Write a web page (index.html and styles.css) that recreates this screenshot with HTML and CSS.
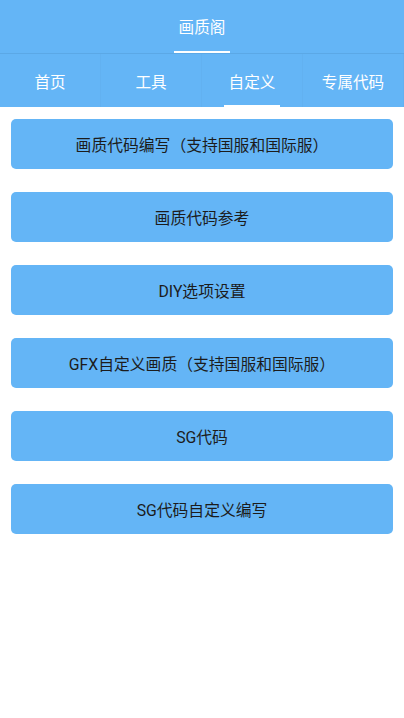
FILE: index.html
```html
<!DOCTYPE html>
<html lang="zh">
<head>
<meta charset="utf-8">
<title>画质阁</title>
<link rel="stylesheet" href="styles.css">
</head>
<body>
<header class="appbar">
  <div class="title-wrap">
    <span class="title">画质阁</span>
  </div>
</header>
<nav class="tabs">
  <div class="tab">首页</div>
  <div class="tab">工具</div>
  <div class="tab active">自定义</div>
  <div class="tab">专属代码</div>
</nav>
<main class="list">
  <button class="item">画质代码编写（支持国服和国际服）</button>
  <button class="item">画质代码参考</button>
  <button class="item">DIY选项设置</button>
  <button class="item">GFX自定义画质（支持国服和国际服）</button>
  <button class="item">SG代码</button>
  <button class="item">SG代码自定义编写</button>
</main>
</body>
</html>
```
FILE: styles.css
```css
* { box-sizing: border-box; }
html, body {
  margin: 0;
  padding: 0;
  background: #ffffff;
  font-family: Roboto, "Noto Sans CJK SC", sans-serif;
}
.appbar {
  height: 54px;
  background: #64b5f6;
  display: flex;
  justify-content: center;
  border-bottom: 1px solid #5ba8e6;
}
.title-wrap {
  width: 56px;
  display: flex;
  align-items: center;
  justify-content: center;
  border-bottom: 2px solid #ffffff;
}
.title {
  color: #ffffff;
  font-size: 15.6px;
}
.tabs {
  height: 53px;
  background: #64b5f6;
  display: grid;
  grid-template-columns: repeat(4, 1fr);
}
.tab {
  display: flex;
  align-items: center;
  justify-content: center;
  color: #ffffff;
  font-size: 15.6px;
  padding-top: 1px;
  position: relative;
  border-right: 1px solid rgba(0, 0, 0, 0.02);
}
.tab.active::after {
  content: "";
  position: absolute;
  left: 50%;
  bottom: 0;
  width: 56px;
  height: 2px;
  margin-left: -28px;
  background: #ffffff;
}
.list {
  display: flex;
  flex-direction: column;
  gap: 23px;
  padding: 12px 11px 0;
}
.item {
  height: 50px;
  border: none;
  border-radius: 5px;
  background: #64b5f6;
  color: #1c1c1c;
  font-family: Roboto, "Noto Sans CJK SC", sans-serif;
  font-size: 15.8px;
  display: flex;
  align-items: center;
  justify-content: center;
  padding: 0;
}
```
